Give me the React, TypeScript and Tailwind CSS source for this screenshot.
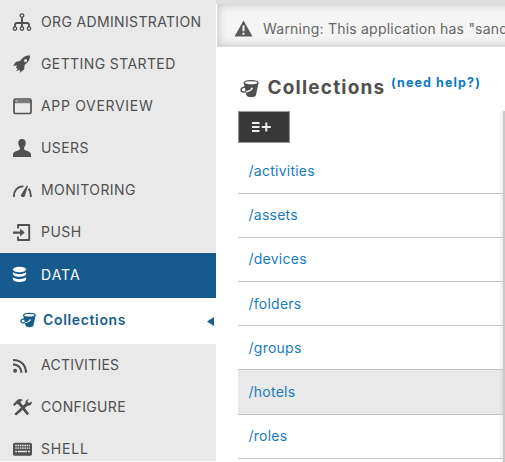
import type { ReactNode } from "react";

const Icon = ({ children, className = "" }: { children: ReactNode; className?: string }) => (
  <svg viewBox="0 0 20 20" width="20" height="20" fill="currentColor" className={`shrink-0 ${className}`}>
    {children}
  </svg>
);

const org = (
  <g fill="none" stroke="currentColor" strokeWidth="1.3">
    <circle cx="10" cy="3.6" r="1.8" />
    <circle cx="3" cy="16.6" r="1.7" />
    <circle cx="10" cy="16.6" r="1.7" />
    <circle cx="17" cy="16.6" r="1.7" />
    <path d="M10 5.4V15M3 15v-2q0-2 2-2h10q2 0 2 2v2" strokeWidth="1.9" />
  </g>
);
const rocket = (
  <path fillRule="evenodd" d="M18 1.500C13 1.500 10.500 3.500 8 7L4 7.700 1 11.800l4-.3-1 2 1.800 1.800-2.200 2 3.700-1.400 1 1.100L7.800 19l4.400-3.700.4-4.400C16.800 8 18 5.500 18 1.500ZM12.200 5.900a1.500 1.500 0 1 1 2.700 1.400 1.500 1.500 0 0 1-2.700-1.400Z" />
);
const windowIcon = (
  <>
    <rect x="2" y="3" width="17" height="14.500" rx="1.500" fill="none" stroke="currentColor" strokeWidth="1.700" />
    <path d="M2 4h17v3.200H2z" opacity=".72" />
    <path d="M3.500 4.500h2v1h-2z" fill="#ddd" />
  </>
);
const user = (
  <path d="M10 1c2.700 0 4 1.900 3.700 4.600-.2 2-.8 2.900-1.600 3.900v2c2 1.500 6.900 1.800 6.900 5V19H1v-2.500c0-3.200 4.900-3.500 6.900-5v-2C7.100 8.500 6.500 7.600 6.300 5.600 6 2.900 7.300 1 10 1Z" />
);
const gauge = (
  <>
    <path d="M2 17c-.5-5.800 3.200-10.800 9.500-10.600M16.700 8.600c1.500 2 2.300 5 2.100 8.400" fill="none" stroke="currentColor" strokeWidth="1.800" />
    <path d="m14.900 5.500 1.100.4-3.200 10c-.9 2.100-4.300 1.200-3.900-1Z" />
  </>
);
const push = (
  <>
    <path d="M6 6.500V3h11.200v15H6v-3.500" fill="none" stroke="currentColor" strokeWidth="1.900" strokeLinejoin="round" />
    <path d="M1 9.500h7.200V6.600l4.500 4-4.500 4v-2.900H1Z" />
  </>
);
const database = (
  <>
    <ellipse cx="7.500" cy="4.500" rx="6.600" ry="2.800" />
    <path d="M.9 6.900c2 2.800 11.200 2.800 13.200 0v1.900c0 4-13.200 4-13.200 0ZM.9 12.100c2 2.800 11.200 2.800 13.200 0V14c0 4-13.200 4-13.200 0Z" />
  </>
);
const rss = (
  <>
    <circle cx="3.100" cy="15.800" r="2" />
    <path d="M1 9.400c5 0 8.400 3.400 8.400 8.400M1 5c8 0 13 5.200 13 12.800" fill="none" stroke="currentColor" strokeWidth="2.100" />
  </>
);
const tools = (
  <>
    <path d="M1 7.500 5 3.200C7 1.500 9 2 11 3L8.500 4.500l.3 1.200L17 16.500 15 18.300 6.700 7.700 4.800 6.800 2.600 9Z" />
    <path d="m4.200 18.600-1.900-1.700 8.500-8.200 2.700-2.500c-.3-2.300.9-3.900 3.100-4.200l-1.200 2.500 1.500 1.500 2.900-1.600c.5 2.900-1.700 4.700-4.300 4.300Z" />
  </>
);
const keyboard = (
  <>
    <rect x="1" y="3.800" width="19" height="13" rx="1.800" />
    <path d="M3.200 6.500h14.700M3.200 9.200h14.700" stroke="#e9e9e9" strokeWidth="1.300" strokeDasharray="1.600 .7" />
    <path d="M3.200 12.500h2M6 12.500h9M16 12.500h2" stroke="#e9e9e9" strokeWidth="1.400" />
  </>
);

const Bucket = ({ size, hole, className = "" }: { size: number; hole: string; className?: string }) => (
  <svg viewBox="0 0 20 20" width={size} height={size} className={`shrink-0 ${className}`}>
    <path d="M4 4.200 6.800 17c.8 2.800 9.200 2.800 10 0L19.500 4.200Z" fill="currentColor" />
    <ellipse cx="11.700" cy="4" rx="7.200" ry="2.300" fill={hole} stroke="currentColor" strokeWidth="1.500" />
    <path d="M5.500 8.800c-4.500-.4-5.700 3.600-2.700 4.600 1.200.4 2.600.3 4-.1" fill="none" stroke="currentColor" strokeWidth="1.600" />
    <path d="M6.400 13.500c2.600-.2 5-1.400 6.100-3.500" fill="none" stroke={hole} strokeWidth="1.300" />
    <circle cx="12.600" cy="9.900" r=".9" fill={hole} />
  </svg>
);

type Item = { label: string; icon: ReactNode; spacing: string };

const topItems: Item[] = [
  { label: "ORG ADMINISTRATION", icon: org, spacing: "tracking-[0.35px]" },
  { label: "GETTING STARTED", icon: rocket, spacing: "tracking-[0.4px]" },
  { label: "APP OVERVIEW", icon: windowIcon, spacing: "tracking-[0.68px]" },
  { label: "USERS", icon: user, spacing: "tracking-[0.4px]" },
  { label: "MONITORING", icon: gauge, spacing: "tracking-[0.4px]" },
  { label: "PUSH", icon: push, spacing: "tracking-[0.5px]" },
];
const bottomItems: Item[] = [
  { label: "ACTIVITIES", icon: rss, spacing: "tracking-[0.25px]" },
  { label: "CONFIGURE", icon: tools, spacing: "tracking-[0.35px]" },
  { label: "SHELL", icon: keyboard, spacing: "tracking-[0.8px]" },
];

const NavRow = ({ item }: { item: Item }) => (
  <li className="flex h-[42px] items-center pl-3">
    <Icon>{item.icon}</Icon>
    <span className={`ml-[9px] text-[14px] leading-5 whitespace-nowrap ${item.spacing}`}>{item.label}</span>
  </li>
);

const collections = ["/activities", "/assets", "/devices", "/folders", "/groups", "/hotels", "/roles"];

export default function App() {
  return (
    <div className="flex h-[462px] w-[505px] overflow-hidden bg-white font-['Inter',sans-serif] text-[#505050]">
      <nav className="h-[461px] w-[216px] shrink-0 overflow-hidden bg-[#e9e9e9]">
        <ul className="h-[253px] pt-px">
          {topItems.map((item) => <NavRow key={item.label} item={item} />)}
        </ul>
        <div className="flex h-[45px] items-center bg-[#175b8e] pb-px pl-3 text-white">
          <Icon>{database}</Icon>
          <span className="ml-[9px] text-[14px] leading-5 tracking-[1px]">DATA</span>
        </div>
        <div className="flex h-[46px] items-center bg-white pb-0.5 pl-5 text-[#185d8f]">
          <Bucket size={16} hole="#fff" />
          <span className="ml-[7px] text-[14px] leading-5 font-semibold tracking-[0.65px]">Collections</span>
          <svg className="mt-0.5 mr-[2px] ml-auto" width="7" height="9" viewBox="0 0 7 9"><path d="M7 0v9L0 4.500Z" fill="currentColor" /></svg>
        </div>
        <ul>
          {bottomItems.map((item) => <NavRow key={item.label} item={item} />)}
        </ul>
      </nav>
      <main className="min-w-0 flex-1">
        <div className="h-1 bg-[#dfdfdf]" />
        <div className="ml-px flex h-[43px] w-[320px] items-center border-b border-l border-[#dedede] bg-[#f5f5f5] pt-[7px] pl-[16px] text-[#666] shadow-[inset_0_0_10px_#bcbcbc]">
          <svg width="19" height="17" viewBox="0 0 19 17" className="shrink-0">
            <path d="M9.500.500 18.500 16.500H.500Z" fill="#5a5a5a" />
            <path d="M8.500 5.500h2v5.700h-2zM8.500 12.700h2v2h-2z" fill="#f5f5f5" />
          </svg>
          <p className="ml-[10px] text-[14px] leading-5 tracking-[0.22px] whitespace-nowrap">Warning: This application has "sand</p>
        </div>
        <header className="flex h-[64px] items-center pt-4 pl-6">
          <Bucket size={19} hole="#fff" className="mt-[2px]" />
          <h1 className="ml-[8.500px] pt-0.5 text-[19px] leading-6 font-bold tracking-[1.2px]">Collections</h1>
          <a className="ml-[5.500px] pb-[9px] text-[12.5px] leading-4 font-bold tracking-[1.12px] whitespace-nowrap text-[#0d79c3]">(need help?)</a>
        </header>
        <div className="flex h-[351px]">
          <section className="ml-[22px] w-[265px] shrink-0">
            <button className="flex h-8 w-[52px] items-center border border-[#999] bg-[#383838] pl-[13px]">
              <svg width="19" height="11" viewBox="0 0 19 11"><path d="M0 1h7.500M0 5h7.500M0 9h7.500M9.800 5h9M14.300 .5v9" stroke="#eee" strokeWidth="2" /></svg>
            </button>
            <ul className="pt-[6.500px]">
              {collections.map((name) => (
                <li key={name} className={`flex h-[44.2px] items-center border-b border-[#c4c4c4] pb-px pl-[10.500px] text-[14px] tracking-[0.25px] text-[#177bbf] ${name === "/hotels" ? "bg-[#e9e9e9]" : ""}`}>
                  {name}
                </li>
              ))}
            </ul>
          </section>
          <div className="flex-1 bg-[#c9c9c9] shadow-[0_0_4px_#bbb]" />
        </div>
      </main>
    </div>
  );
}
